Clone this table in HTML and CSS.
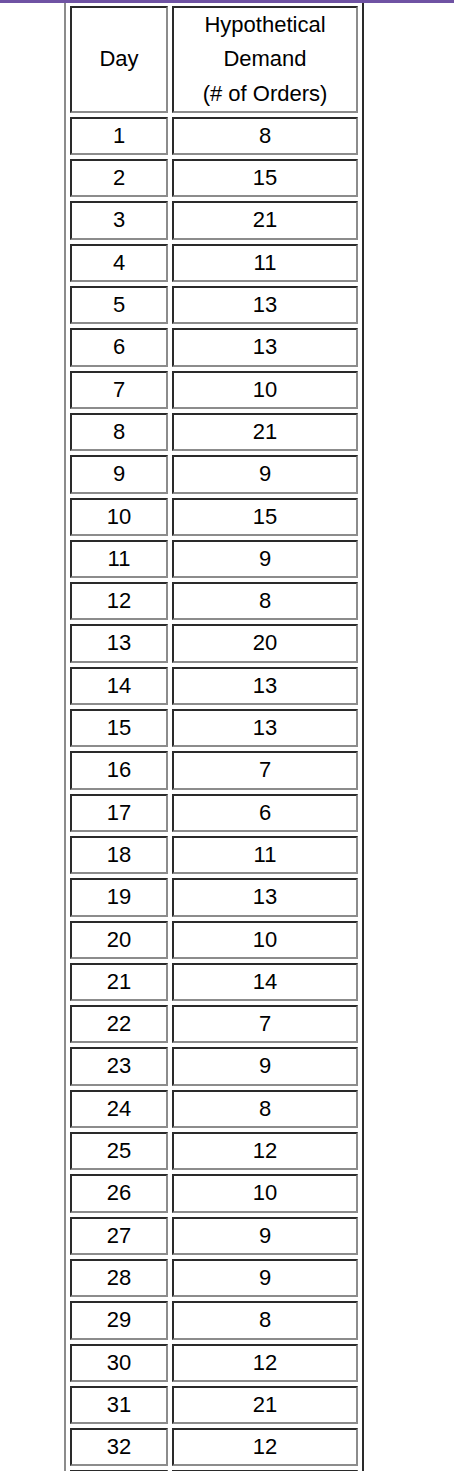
FILE: index.html
```html
<!DOCTYPE html>
<html>
<head>
<meta charset="utf-8">
<link rel="stylesheet" href="styles.css">
</head>
<body>
<div class="page">
<table class="demand">
<tr><td class="day">Day</td><td class="val">Hypothetical<br>Demand<br>(# of Orders)</td></tr>
<tr><td>1</td><td>8</td></tr>
<tr><td>2</td><td>15</td></tr>
<tr><td>3</td><td>21</td></tr>
<tr><td>4</td><td>11</td></tr>
<tr><td>5</td><td>13</td></tr>
<tr><td>6</td><td>13</td></tr>
<tr><td>7</td><td>10</td></tr>
<tr><td>8</td><td>21</td></tr>
<tr><td>9</td><td>9</td></tr>
<tr><td>10</td><td>15</td></tr>
<tr><td>11</td><td>9</td></tr>
<tr><td>12</td><td>8</td></tr>
<tr><td>13</td><td>20</td></tr>
<tr><td>14</td><td>13</td></tr>
<tr><td>15</td><td>13</td></tr>
<tr><td>16</td><td>7</td></tr>
<tr><td>17</td><td>6</td></tr>
<tr><td>18</td><td>11</td></tr>
<tr><td>19</td><td>13</td></tr>
<tr><td>20</td><td>10</td></tr>
<tr><td>21</td><td>14</td></tr>
<tr><td>22</td><td>7</td></tr>
<tr><td>23</td><td>9</td></tr>
<tr><td>24</td><td>8</td></tr>
<tr><td>25</td><td>12</td></tr>
<tr><td>26</td><td>10</td></tr>
<tr><td>27</td><td>9</td></tr>
<tr><td>28</td><td>9</td></tr>
<tr><td>29</td><td>8</td></tr>
<tr><td>30</td><td>12</td></tr>
<tr><td>31</td><td>21</td></tr>
<tr><td>32</td><td>12</td></tr>
<tr class="next"><td>&nbsp;</td><td>&nbsp;</td></tr>
</table>
</div>
</body>
</html>
```
FILE: styles.css
```css
html, body {
  margin: 0;
  padding: 0;
  background: #ffffff;
}
.page {
  height: 1471px;
  overflow: hidden;
  border-top: 3px solid #6f52a3;
  box-sizing: border-box;
}
.demand {
  margin: -1px 0 0 64px;
  border-collapse: separate;
  border-spacing: 4px;
  border-style: solid;
  border-width: 0 2px 2px 2px;
  border-color: #8c8c8c #2a2a2a #2a2a2a #8c8c8c;
  font-family: "Liberation Sans", Arial, Helvetica, sans-serif;
  font-size: 22px;
  line-height: 34.3px;
  color: #000;
}
.demand td {
  border-style: solid;
  border-width: 2px;
  border-color: #2a2a2a #8c8c8c #8c8c8c #2a2a2a;
  padding: 0;
  text-align: center;
  vertical-align: middle;
}
.demand td.day {
  width: 94px;
}
.demand td.val {
  width: 182px;
}
```
